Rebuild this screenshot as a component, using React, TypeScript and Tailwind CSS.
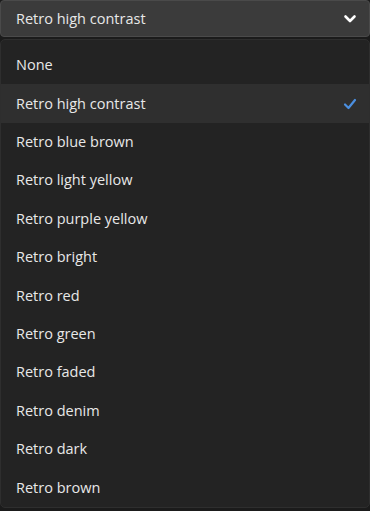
import { useState } from 'react';

const options = [
  'None',
  'Retro high contrast',
  'Retro blue brown',
  'Retro light yellow',
  'Retro purple yellow',
  'Retro bright',
  'Retro red',
  'Retro green',
  'Retro faded',
  'Retro denim',
  'Retro dark',
  'Retro brown',
];

export default function App() {
  const [selected, setSelected] = useState('Retro high contrast');

  return (
    <div className="h-[511px] w-[370px] overflow-hidden bg-[#1b1b1b] text-[14.5px] text-[#e8e8e8] [font-family:'Open_Sans',sans-serif]">
      {/* select trigger */}
      <button className="flex h-[37px] w-full items-center justify-between rounded-[4px] border border-[#4a4a4a] bg-[#3b3b3b] pl-[15px] pr-[12px]">
        <span>{selected}</span>
        <svg width="14" height="10" viewBox="0 0 14 10" className="text-white">
          <path d="M2.5 2.5 L7 7 L11.5 2.5" fill="none" stroke="currentColor" strokeWidth="2.6" strokeLinecap="round" strokeLinejoin="round" />
        </svg>
      </button>

      {/* menu */}
      <ul className="mt-[2px] rounded-[5px] border border-[#2e2e2e] bg-[#232323] pt-[6px]">
        {options.map((opt) => (
          <li
            key={opt}
            onClick={() => setSelected(opt)}
            className={`flex h-[38.4px] items-center justify-between pl-[15px] pr-[12px] ${
              opt === selected ? 'bg-[#2f2f2f]' : ''
            }`}
          >
            <span>{opt}</span>
            {opt === selected && (
              <svg width="14" height="12" viewBox="0 0 14 12">
                <path d="M2 6.5 L5.5 10 L12 2" fill="none" stroke="#4b8fe0" strokeWidth="2.2" strokeLinecap="round" strokeLinejoin="round" />
              </svg>
            )}
          </li>
        ))}
      </ul>
    </div>
  );
}
